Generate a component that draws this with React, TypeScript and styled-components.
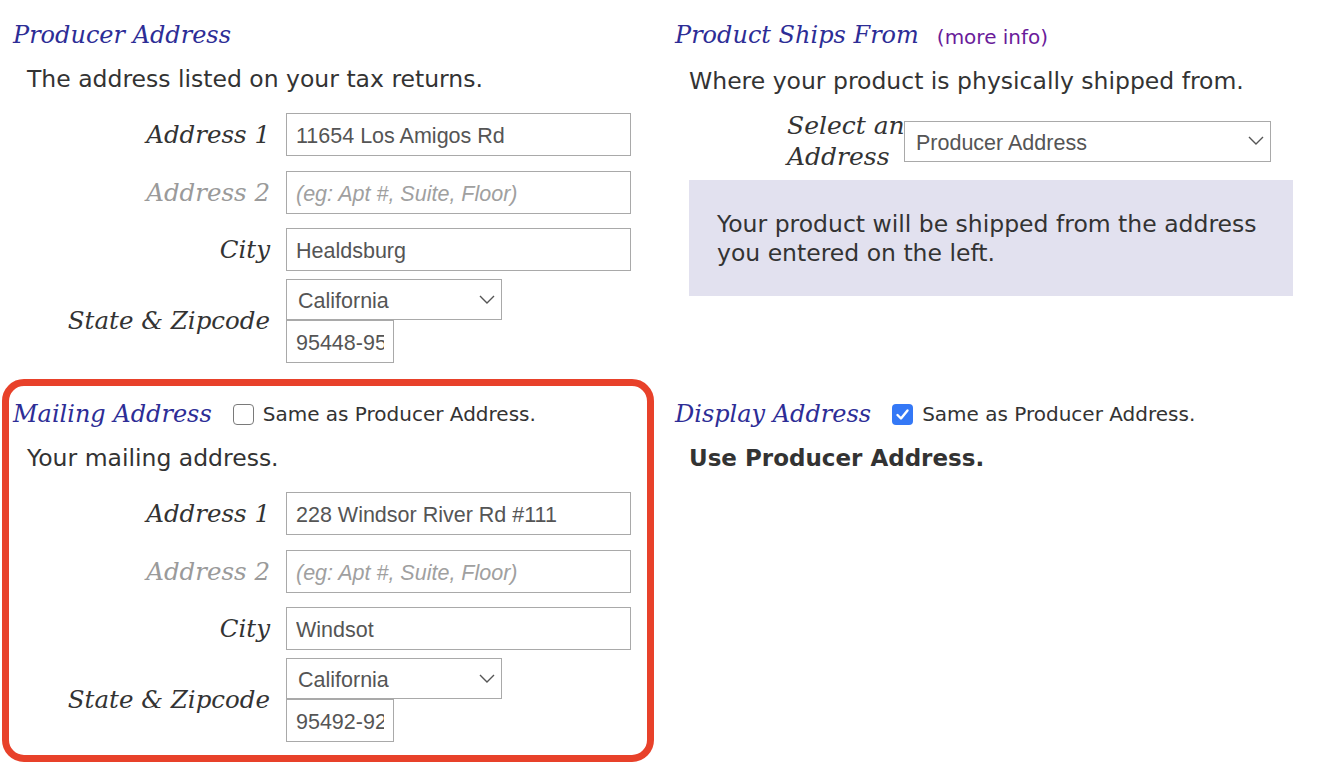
import React from "react";
import styled, { createGlobalStyle } from "styled-components";

const GlobalStyle = createGlobalStyle`
  html, body { margin: 0; padding: 0; background: #ffffff; }
  body { font-family: "DejaVu Sans", Verdana, sans-serif; color: #333333; }
  * { box-sizing: border-box; }
`;

const Page = styled.div`
  display: grid;
  grid-template-columns: 662px 1fr;
  grid-template-rows: auto auto;
  align-content: start;
  row-gap: 36px;
  padding: 20px 0 0 13px;
  width: 1318px;
  height: 762px;
  overflow: hidden;
`;

const Section = styled.section`
  position: relative;
  display: flex;
  flex-direction: column;
  align-items: flex-start;
`;

const Highlight = styled.div`
  position: absolute;
  left: -11px;
  top: -20px;
  right: 21px;
  bottom: -20px;
  border: 7px solid #e8412a;
  border-radius: 22px;
  pointer-events: none;
`;

const HeadingRow = styled.div`
  display: flex;
  align-items: center;
  height: 30px;
`;

const Heading = styled.h2`
  margin: 0;
  font-family: "DejaVu Serif", Georgia, serif;
  font-style: italic;
  font-weight: normal;
  font-size: 24px;
  line-height: 30px;
  color: #2d2d96;
  white-space: nowrap;
`;

const InfoLink = styled.a`
  margin-left: 18px;
  margin-top: 4px;
  font-size: 20px;
  color: #6a1b9a;
  text-decoration: none;
`;

const CheckLabel = styled.label`
  display: flex;
  align-items: center;
  margin-left: 21px;
  gap: 9px;
  font-size: 20px;
  color: #333333;
  white-space: nowrap;
`;

const Box = styled.span<{ $checked?: boolean }>`
  display: inline-flex;
  align-items: center;
  justify-content: center;
  width: 21px;
  height: 21px;
  border-radius: 4px;
  border: ${(p) => (p.$checked ? "none" : "1.5px solid #7a7a7a")};
  background: ${(p) => (p.$checked ? "#3478f6" : "#ffffff")};
`;

const Description = styled.p<{ $bold?: boolean; $space?: number }>`
  margin: ${(p) => p.$space ?? 15}px 0 0 14px;
  font-size: ${(p) => (p.$bold ? 23 : 23.5)}px;
  line-height: 28px;
  font-weight: ${(p) => (p.$bold ? "bold" : "normal")};
  color: #333333;
  white-space: nowrap;
`;

const Form = styled.div`
  display: flex;
  flex-direction: column;
  margin-top: 20px;
`;

const FieldRow = styled.div<{ $space?: number }>`
  display: grid;
  grid-template-columns: 257px 345px;
  column-gap: 16px;
  align-items: center;
  margin-top: ${(p) => p.$space ?? 0}px;
`;

const FieldLabel = styled.label<{ $muted?: boolean }>`
  text-align: right;
  font-family: "DejaVu Serif", Georgia, serif;
  font-style: italic;
  font-size: 24.5px;
  line-height: 30px;
  color: ${(p) => (p.$muted ? "#9a9a9a" : "#333333")};
  white-space: nowrap;
`;

const TextInput = styled.input<{ $w?: number }>`
  width: ${(p) => p.$w ?? 345}px;
  height: 43px;
  border: 1px solid #a9a9a9;
  border-radius: 0;
  padding: 3px 9px 0;
  font-family: "Liberation Sans", Arial, sans-serif;
  font-size: 21.5px;
  color: #555555;
  background: #ffffff;
  outline: none;
  &::placeholder {
    color: #a0a0a0;
    font-style: italic;
  }
`;

const SelectWrap = styled.div<{ $w: number; $h: number }>`
  position: relative;
  width: ${(p) => p.$w}px;
  height: ${(p) => p.$h}px;
`;

const Select = styled.select`
  appearance: none;
  -webkit-appearance: none;
  width: 100%;
  height: 100%;
  border: 1px solid #a9a9a9;
  border-radius: 0;
  padding: 3px 30px 0 11px;
  font-family: "Liberation Sans", Arial, sans-serif;
  font-size: 21.5px;
  color: #555555;
  background: #ffffff;
  outline: none;
`;

const Chevron = styled.svg`
  position: absolute;
  right: 6px;
  top: 50%;
  margin-top: -9px;
  pointer-events: none;
`;

const StateStack = styled.div`
  display: flex;
  flex-direction: column;
`;

const ShipRow = styled.div`
  display: grid;
  grid-template-columns: 119px 367px;
  align-items: center;
  margin: 15px 0 0 110px;
`;

const ShipLabel = styled.label`
  font-family: "DejaVu Serif", Georgia, serif;
  font-style: italic;
  font-size: 25px;
  line-height: 31px;
  color: #333333;
  white-space: nowrap;
  padding-left: 2px;
`;

const Notice = styled.div`
  margin: 8px 0 0 14px;
  width: 604px;
  height: 116px;
  padding: 30px 28px 0;
  background: #e2e1ef;
  font-size: 23.5px;
  line-height: 29px;
  color: #333333;
  white-space: nowrap;
`;

const ChevronIcon = () => (
  <Chevron width="18" height="16" viewBox="0 0 18 16">
    <path d="M2 5 L9 12 L16 5" fill="none" stroke="#555" strokeWidth="1.4" />
  </Chevron>
);

const Checkbox = ({ checked }: { checked?: boolean }) => (
  <Box $checked={checked}>
    {checked && (
      <svg width="15" height="15" viewBox="0 0 15 15">
        <path d="M2.5 8 L6 11.5 L12.5 3.5" fill="none" stroke="#fff" strokeWidth="2.4" strokeLinecap="round" strokeLinejoin="round" />
      </svg>
    )}
  </Box>
);

type Addr = { a1: string; city: string; zip: string };

const AddressForm = ({ a1, city, zip }: Addr) => (
  <Form>
    <FieldRow>
      <FieldLabel>Address 1</FieldLabel>
      <TextInput defaultValue={a1} />
    </FieldRow>
    <FieldRow $space={15}>
      <FieldLabel $muted>Address 2</FieldLabel>
      <TextInput placeholder="(eg: Apt #, Suite, Floor)" />
    </FieldRow>
    <FieldRow $space={14}>
      <FieldLabel>City</FieldLabel>
      <TextInput defaultValue={city} />
    </FieldRow>
    <FieldRow $space={8}>
      <FieldLabel>State &amp; Zipcode</FieldLabel>
      <StateStack>
        <SelectWrap $w={216} $h={41}>
          <Select defaultValue="CA">
            <option value="CA">California</option>
          </Select>
          <ChevronIcon />
        </SelectWrap>
        <TextInput $w={108} defaultValue={zip} />
      </StateStack>
    </FieldRow>
  </Form>
);

export default function App() {
  return (
    <>
      <GlobalStyle />
      <Page>
        <Section>
          <HeadingRow>
            <Heading>Producer Address</Heading>
          </HeadingRow>
          <Description>The address listed on your tax returns.</Description>
          <AddressForm a1="11654 Los Amigos Rd" city="Healdsburg" zip="95448-9512" />
        </Section>

        <Section>
          <HeadingRow>
            <Heading>Product Ships From</Heading>
            <InfoLink href="#">(more info)</InfoLink>
          </HeadingRow>
          <Description $space={17}>Where your product is physically shipped from.</Description>
          <ShipRow>
            <ShipLabel>
              Select an
              <br />
              Address
            </ShipLabel>
            <SelectWrap $w={367} $h={41}>
              <Select defaultValue="producer">
                <option value="producer">Producer Address</option>
              </Select>
              <ChevronIcon />
            </SelectWrap>
          </ShipRow>
          <Notice>
            Your product will be shipped from the address
            <br />
            you entered on the left.
          </Notice>
        </Section>

        <Section>
          <Highlight />
          <HeadingRow>
            <Heading>Mailing Address</Heading>
            <CheckLabel>
              <Checkbox />
              Same as Producer Address.
            </CheckLabel>
          </HeadingRow>
          <Description>Your mailing address.</Description>
          <AddressForm a1="228 Windsor River Rd #111" city="Windsot" zip="95492-9214" />
        </Section>

        <Section>
          <HeadingRow>
            <Heading>Display Address</Heading>
            <CheckLabel>
              <Checkbox checked />
              Same as Producer Address.
            </CheckLabel>
          </HeadingRow>
          <Description $bold>Use Producer Address.</Description>
        </Section>
      </Page>
    </>
  );
}
